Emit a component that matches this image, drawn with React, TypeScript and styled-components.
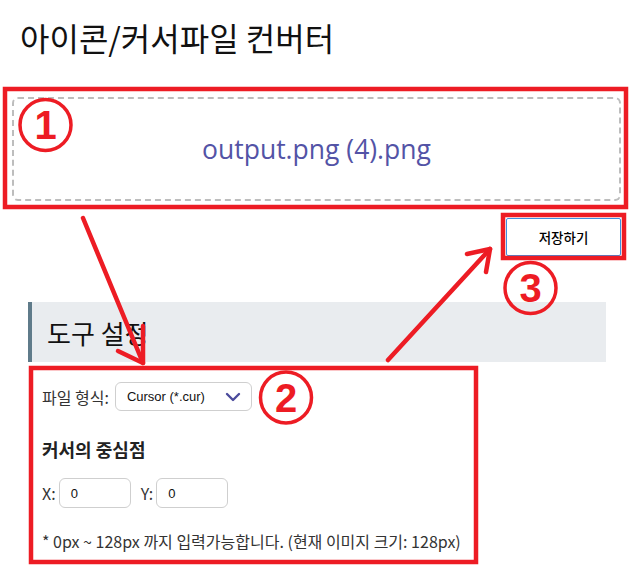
import React from "react";
import styled, { createGlobalStyle } from "styled-components";

const Global = createGlobalStyle`
  html, body { margin: 0; padding: 0; background: #fff; }
  body { font-family: "Noto Sans CJK KR", "Noto Sans", sans-serif; color: #222; }
`;

const Page = styled.div`
  position: relative;
  width: 635px;
  height: 579px;
  overflow: hidden;
  padding: 0 14px 0 12px;
  box-sizing: border-box;
`;

const Title = styled.h1`
  margin: 0;
  padding: 16px 0 0 8px;
  height: 80px;
  box-sizing: border-box;
  font-size: 32px;
  line-height: 42px;
  font-weight: 400;
  color: #111;
`;

const DropZone = styled.div`
  margin-top: 17px;
  height: 104px;
  box-sizing: border-box;
  border: 2px dashed #bdbdbd;
  border-radius: 6px;
  display: flex;
  align-items: center;
  justify-content: center;
  font-family: "Open Sans", "Noto Sans", sans-serif;
  font-size: 26.5px;
  color: #5353a6;
`;

const ActionBar = styled.div`
  display: flex;
  justify-content: flex-end;
  margin-top: 17px;
`;

const SaveButton = styled.button`
  width: 115px;
  height: 38px;
  background: #fff;
  border: 1px solid #3d8fe0;
  border-radius: 2px;
  font-family: "Noto Sans CJK KR", sans-serif;
  font-size: 13.5px;
  font-weight: 500;
  color: #000;
`;

const Section = styled.section`
  margin: 46px 15px 0 16px;
`;

const SectionHeader = styled.h2`
  margin: 0;
  height: 60px;
  box-sizing: border-box;
  background: #e9ecef;
  border-left: 4px solid #5f7b8a;
  padding-left: 15px;
  display: flex;
  align-items: center;
  font-size: 26px;
  font-weight: 400;
  color: #111;
`;

const SettingsBody = styled.div`
  padding: 20px 0 0 14px;
  display: flex;
  flex-direction: column;
`;

const Row = styled.div<{ $gap?: number }>`
  display: flex;
  align-items: center;
  gap: ${(p) => p.$gap ?? 4}px;
`;

const Label = styled.span`
  font-size: 16px;
  color: #333;
`;

const Select = styled.div`
  width: 137px;
  height: 29px;
  box-sizing: border-box;
  border: 1px solid #cfcfcf;
  border-radius: 6px;
  display: flex;
  align-items: center;
  justify-content: space-between;
  padding: 0 10px 0 11px;
  font-family: "Liberation Sans", Arial, sans-serif;
  font-size: 13px;
  color: #111;
`;

const SubTitle = styled.h3`
  margin: 26px 0 0 0;
  font-size: 18px;
  font-weight: 700;
  line-height: 24px;
  color: #222;
`;

const Field = styled.div`
  display: flex;
  align-items: center;
  gap: 3px;
`;

const NumInput = styled.div`
  width: 72px;
  height: 30px;
  box-sizing: border-box;
  border: 1px solid #cfcfcf;
  border-radius: 6px;
  display: flex;
  align-items: center;
  padding-left: 11px;
  font-family: "Liberation Sans", Arial, sans-serif;
  font-size: 13px;
  color: #111;
`;

const PointRow = styled(Row)`
  margin-top: 17px;
  gap: 10px;
`;

const Note = styled.p`
  margin: 22px 0 0 0;
  font-size: 16px;
  line-height: 22px;
  color: #333;
`;

const Overlay = styled.svg`
  position: absolute;
  left: 0;
  top: 0;
  pointer-events: none;
`;

const RED = "#ed1c24";

const Marker = ({ cx, cy, n }: { cx: number; cy: number; n: string }) => (
  <g>
    <circle cx={cx} cy={cy} r={25.5} fill="none" stroke={RED} strokeWidth={3.5} />
    <text
      x={cx}
      y={cy + 14}
      textAnchor="middle"
      fontFamily="'Liberation Sans', Arial, sans-serif"
      fontWeight={700}
      fontSize={40}
      fill={RED}
    >
      {n}
    </text>
  </g>
);

export default function App() {
  return (
    <>
      <Global />
      <Page>
        <Title>아이콘/커서파일 컨버터</Title>
        <DropZone>output.png (4).png</DropZone>
        <ActionBar>
          <SaveButton>저장하기</SaveButton>
        </ActionBar>
        <Section>
          <SectionHeader>도구 설정</SectionHeader>
          <SettingsBody>
            <Row $gap={6}>
              <Label>파일 형식:</Label>
              <Select>
                <span>Cursor (*.cur)</span>
                <svg width="16" height="10" viewBox="0 0 16 10">
                  <path d="M2 2 L8 8 L14 2" fill="none" stroke="#4b4b9c" strokeWidth="2.4" strokeLinecap="round" strokeLinejoin="round" />
                </svg>
              </Select>
            </Row>
            <SubTitle>커서의 중심점</SubTitle>
            <PointRow>
              <Field>
                <Label>X:</Label>
                <NumInput>0</NumInput>
              </Field>
              <Field>
                <Label>Y:</Label>
                <NumInput>0</NumInput>
              </Field>
            </PointRow>
            <Note>* 0px ~ 128px 까지 입력가능합니다. (현재 이미지 크기: 128px)</Note>
          </SettingsBody>
        </Section>

        <Overlay width={635} height={579} viewBox="0 0 635 579">
          <g fill="none" stroke={RED} strokeWidth={4.5}>
            <rect x={5} y={89} width={621} height={118} />
            <rect x={503} y={215} width={121} height={43} />
            <rect x={31} y={368} width={445} height={194} />
          </g>
          <g fill="none" stroke={RED} strokeWidth={4.5} strokeLinecap="round" strokeLinejoin="round">
            <path d="M83 218 L143 363" />
            <path d="M143 326 L143 363 L118 351" />
            <path d="M388 360 L490 249" />
            <path d="M467 254 L490 249 L486 272" />
          </g>
          <Marker cx={45.5} cy={125} n="1" />
          <Marker cx={286} cy={397.5} n="2" />
          <Marker cx={530.5} cy={288} n="3" />
        </Overlay>
      </Page>
    </>
  );
}
